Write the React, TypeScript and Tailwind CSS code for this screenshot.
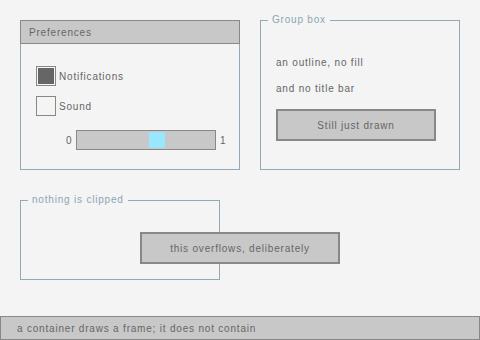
import React from "react";

const font = "font-['Liberation_Sans',Arial,sans-serif] text-[10px] tracking-[0.8px]";

const Checkbox = ({ checked, label }: { checked: boolean; label: string }) => (
  <div className="flex items-center h-[20px]">
    <div className="w-[20px] h-[20px] border border-[#888888] p-[1px] shrink-0">
      {checked && <div className="w-full h-full bg-[#666666]" />}
    </div>
    <span className="ml-[3px]">{label}</span>
  </div>
);

const Legend = ({ children }: { children: React.ReactNode }) => (
  <span className="absolute left-[7px] top-[-8px] px-[4px] bg-[#f4f4f4] text-[#8aa6b4] leading-[14px]">
    {children}
  </span>
);

export default function App() {
  return (
    <div className={`w-[480px] h-[340px] bg-[#f4f4f4] text-[#666666] flex flex-col ${font}`}>
      <div className="flex gap-[20px] pl-[20px] pt-[20px]">
        <div className="w-[220px] h-[150px] flex flex-col">
          <div className="h-[24px] border border-[#888888] bg-[#c8c8c8] pl-[8px] flex items-center">
            Preferences
          </div>
          <div className="flex-1 border-x border-b border-[#8fabb8] pl-[15px] pt-[22px] flex flex-col">
            <div className="flex flex-col gap-[10px]">
              <Checkbox checked label="Notifications" />
              <Checkbox checked={false} label="Sound" />
            </div>
            <div className="flex items-center mt-[14px] ml-[30px] h-[20px]">
              <span className="w-[10px]">0</span>
              <div className="w-[140px] h-[20px] border border-[#888888] bg-[#c8c8c8] pt-[1px] pl-[72px]">
                <div className="w-[16px] h-[16px] bg-[#99e6ff]" />
              </div>
              <span className="ml-[4px]">1</span>
            </div>
          </div>
        </div>

        <div className="relative w-[200px] h-[150px] border border-[#8fabb8] pl-[15px] pt-[35px]">
          <Legend>Group box</Legend>
          <div className="h-[12px] flex items-center">an outline, no fill</div>
          <div className="h-[12px] flex items-center mt-[14px]">and no title bar</div>
          <div className="mt-[15px] w-[160px] h-[32px] border-2 border-[#888888] bg-[#c8c8c8] flex items-center justify-center">
            Still just drawn
          </div>
        </div>
      </div>

      <div className="relative ml-[20px] mt-[30px] w-[200px] h-[80px] border border-[#8fabb8] pl-[119px] pt-[31px]">
        <Legend>nothing is clipped</Legend>
        <div className="w-[200px] h-[32px] border-2 border-[#888888] bg-[#c8c8c8] flex items-center justify-center">
          this overflows, deliberately
        </div>
      </div>

      <div className="mt-auto h-[24px] border border-[#888888] bg-[#c8c8c8] pl-[16px] flex items-center">
        a container draws a frame; it does not contain
      </div>
    </div>
  );
}
